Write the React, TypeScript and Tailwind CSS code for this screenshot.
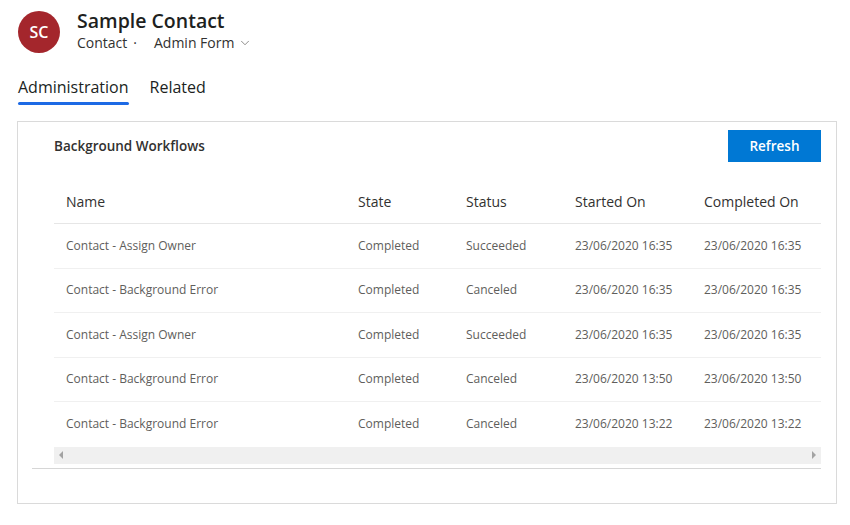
import { ChevronDown } from "lucide-react";

interface Run {
  name: string;
  state: string;
  status: string;
  started: string;
  completed: string;
}

const runs: Run[] = [
  { name: "Contact - Assign Owner", state: "Completed", status: "Succeeded", started: "23/06/2020 16:35", completed: "23/06/2020 16:35" },
  { name: "Contact - Background Error", state: "Completed", status: "Canceled", started: "23/06/2020 16:35", completed: "23/06/2020 16:35" },
  { name: "Contact - Assign Owner", state: "Completed", status: "Succeeded", started: "23/06/2020 16:35", completed: "23/06/2020 16:35" },
  { name: "Contact - Background Error", state: "Completed", status: "Canceled", started: "23/06/2020 13:50", completed: "23/06/2020 13:50" },
  { name: "Contact - Background Error", state: "Completed", status: "Canceled", started: "23/06/2020 13:22", completed: "23/06/2020 13:22" },
];

const cols = ["w-[292px]", "w-[108px]", "w-[109px]", "w-[129px]", "w-[150px]"];

export default function App() {
  return (
    <div className="w-[850px] h-[525px] bg-white font-['Open_Sans',sans-serif] text-[#323130] overflow-hidden">
      <div className="flex items-center gap-[17px] pl-[18px] pt-[10px]">
        <div className="w-[42px] h-[42px] rounded-full bg-[#a4262c] text-white flex items-center justify-center text-[16px] font-semibold">
          SC
        </div>
        <div className="flex flex-col -mt-[1px]">
          <div className="text-[19.5px] font-semibold leading-[24px] text-[#201f1e]">Sample Contact</div>
          <div className="flex items-center text-[14px] leading-[20px] text-[#323130]">
            <span>Contact</span>
            <span className="ml-[6px]">·</span>
            <span className="ml-[17px]">Admin Form</span>
            <ChevronDown className="ml-[4px] w-[14px] h-[14px] text-[#605e5c]" strokeWidth={1.2} />
          </div>
        </div>
      </div>

      <div className="flex gap-[21px] pl-[18px] mt-[21px]">
        <div className="flex flex-col">
          <span className="text-[16px] leading-[26px] text-[#201f1e]">Administration</span>
          <div className="h-[3px] rounded-full bg-[#1d6ae5] mt-[2px]" />
        </div>
        <span className="text-[16px] leading-[26px] text-[#201f1e]">Related</span>
      </div>

      <div className="ml-[17px] mr-[13px] mt-[16px] h-[383px] border border-[#dadada] pt-[8px] pr-[15px]">
        <div className="flex items-center justify-between pl-[36px]">
          <span className="text-[13.5px] font-semibold text-[#323130]">Background Workflows</span>
          <button className="w-[93px] h-[32px] bg-[#0078d4] text-white text-[13.5px] font-semibold">Refresh</button>
        </div>

        <div className="ml-[36px] mt-[18px] overflow-hidden">
          <div className="flex h-[44px] items-center border-b border-[#e6e6e6] text-[14px] text-[#323130]">
            {["Name", "State", "Status", "Started On", "Completed On"].map((h, i) => (
              <div key={h} className={`${cols[i]} shrink-0 pl-[12px] whitespace-nowrap`}>{h}</div>
            ))}
          </div>
          {runs.map((r, idx) => (
            <div
              key={idx}
              className={`flex h-[44.5px] items-center text-[12px] text-[#605e5c] ${idx < runs.length - 1 ? "border-b border-[#f0f0f0]" : ""}`}
            >
              {[r.name, r.state, r.status, r.started, r.completed].map((c, i) => (
                <div key={i} className={`${cols[i]} shrink-0 pl-[12px] whitespace-nowrap`}>{c}</div>
              ))}
            </div>
          ))}
          <div className="h-[17px] bg-[#f0f0f0] flex items-center justify-between px-[5px]">
            <div className="w-0 h-0 border-y-[4px] border-y-transparent border-r-[4px] border-r-[#a3a3a3]" />
            <div className="w-0 h-0 border-y-[4px] border-y-transparent border-l-[4px] border-l-[#a3a3a3]" />
          </div>
        </div>
        <div className="ml-[14px] mt-[4px] border-t border-[#d6d6d6]" />
      </div>
    </div>
  );
}
